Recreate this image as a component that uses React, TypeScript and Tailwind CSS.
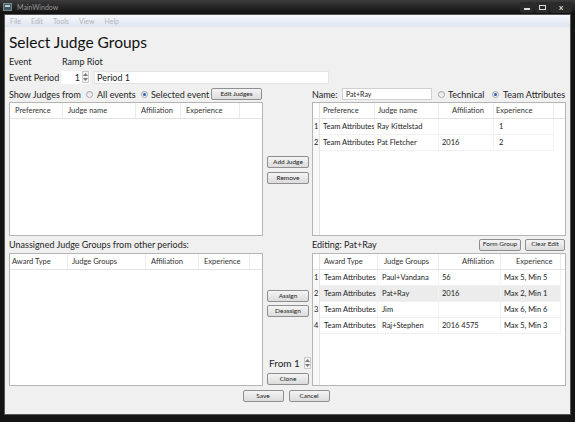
import React from "react";

type Col = { w: number; hx: number; cx: number; label: string };

const Btn = ({ label, w }: { label: string; w: number }) => (
  <div
    className="flex h-[12px] items-center justify-center whitespace-nowrap rounded-[2px] border border-[#8f8f8f] bg-linear-to-b from-[#f4f4f4] to-[#dcdcdc] text-[6.5px] leading-none text-[#222]"
    style={{ width: w }}
  >
    {label}
  </div>
);

const Radio = ({ on }: { on?: boolean }) => (
  <div className="flex h-[7px] w-[7px] shrink-0 items-center justify-center rounded-full border border-[#a5a5a5] bg-linear-to-b from-[#e2e2e2] to-white">
    {on && <div className="h-[3px] w-[3px] rounded-full bg-[#2b5fb4]" />}
  </div>
);

const Arrows = () => (
  <div className="flex h-[12px] w-[7px] flex-col items-center justify-center gap-[2px] border border-[#c9c9c9] bg-[#f3f3f3]">
    <svg width="5" height="3" viewBox="0 0 5 3">
      <path d="M0 3 L2.5 0 L5 3 Z" fill="#777" />
    </svg>
    <svg width="5" height="3" viewBox="0 0 5 3">
      <path d="M0 0 L2.5 3 L5 0 Z" fill="#777" />
    </svg>
  </div>
);

const Table = ({
  cols,
  rows,
  numbered,
  selected,
  h,
}: {
  cols: Col[];
  rows: string[][];
  numbered?: boolean;
  selected?: number;
  h: number;
}) => (
  <div
    className="w-[254px] overflow-hidden border border-[#b5b5b5] bg-white text-[7.5px] text-[#222]"
    style={{ height: h }}
  >
    <div className="flex h-[16px] items-center border-b border-[#e3e3e3] bg-white">
      {numbered && <div className="h-full w-[7px] shrink-0 border-r border-[#e3e3e3]" />}
      {cols.map((c) => (
        <div
          key={c.label}
          className="h-full shrink-0 overflow-hidden whitespace-nowrap border-r border-[#ececec] leading-[15px] text-[#333]"
          style={{ width: c.w, paddingLeft: c.hx }}
        >
          {c.label}
        </div>
      ))}
    </div>
    <div className="flex">
      {numbered && (
        <div className="flex h-[120px] w-[7px] shrink-0 flex-col border-r border-[#e3e3e3] bg-[#f9f9f9]">
          {rows.map((_, i) => (
            <div key={i} className="h-[16px] pl-[1px] leading-[16px]">
              {i + 1}
            </div>
          ))}
        </div>
      )}
      <div className="flex flex-col">
        {rows.map((r, i) => (
          <div
            key={i}
            className={`flex h-[16px] items-center border-b border-[#f0f0f0] ${
              selected === i ? "bg-[#ececec]" : ""
            }`}
          >
            {r.map((cell, j) => (
              <div
                key={j}
                className="h-full shrink-0 overflow-hidden whitespace-nowrap border-r border-[#f3f3f3] leading-[16px]"
                style={{ width: cols[j].w, paddingLeft: cols[j].cx }}
              >
                {cell}
              </div>
            ))}
          </div>
        ))}
      </div>
    </div>
  </div>
);

export default function App() {
  const topLeft: Col[] = [
    { w: 53, hx: 5, cx: 5, label: "Preference" },
    { w: 73, hx: 5, cx: 5, label: "Judge name" },
    { w: 45, hx: 5, cx: 5, label: "Affiliation" },
    { w: 59, hx: 5, cx: 5, label: "Experience" },
  ];
  const topRight: Col[] = [
    { w: 55, hx: 3, cx: 3, label: "Preference" },
    { w: 64, hx: 3, cx: 2, label: "Judge name" },
    { w: 55, hx: 13, cx: 3, label: "Affiliation" },
    { w: 60, hx: 2, cx: 5, label: "Experience" },
  ];
  const botLeft: Col[] = [
    { w: 58, hx: 2, cx: 2, label: "Award Type" },
    { w: 78, hx: 4, cx: 4, label: "Judge Groups" },
    { w: 53, hx: 5, cx: 5, label: "Affiliation" },
    { w: 51, hx: 5, cx: 5, label: "Experience" },
  ];
  const botRight: Col[] = [
    { w: 58, hx: 4, cx: 4, label: "Award Type" },
    { w: 61, hx: 6, cx: 4, label: "Judge Groups" },
    { w: 62, hx: 23, cx: 3, label: "Affiliation" },
    { w: 60, hx: 15, cx: 3, label: "Experience" },
  ];

  return (
    <div className="flex h-[422px] w-[575px] flex-col overflow-hidden bg-[#141414] font-['Lato',sans-serif]">
      {/* title bar */}
      <div className="flex h-[14px] items-center bg-linear-to-b from-[#3c3c3c] to-[#111] pl-[3px] pr-[3px]">
        <div className="h-[8px] w-[9px] border border-[#7a8a8a] bg-[#3d5a5a]">
          <div className="m-[1px] h-[2px] bg-[#bcd]" />
        </div>
        <span className="ml-[5px] text-[7px] text-[#9a9a9a]">MainWindow</span>
        <div className="ml-auto flex h-[11px] items-center gap-[1px]">
          <div className="flex h-full w-[14px] items-center justify-center rounded-[2px] bg-[#2a2a2a]">
            <div className="mt-[3px] h-[2px] w-[6px] bg-[#ddd]" />
          </div>
          <div className="flex h-full w-[14px] items-center justify-center rounded-[2px] bg-[#2a2a2a]">
            <div className="h-[5px] w-[7px] border-[1.5px] border-[#ddd]" />
          </div>
          <div className="flex h-full w-[22px] items-center justify-center rounded-[2px] bg-[#2a2a2a] text-[8px] font-bold leading-none text-[#ddd]">
            x
          </div>
        </div>
      </div>

      <div className="flex flex-1 flex-col px-[4px] pb-[7px]">
        <div className="flex flex-1 flex-col border border-[#555]">
          {/* menu */}
          <div className="flex h-[12px] items-center gap-[10px] bg-linear-to-b from-[#f7f9fc] to-[#dde5f1] pl-[5px] text-[7px] text-[#b0b4ba]">
            <span>File</span>
            <span>Edit</span>
            <span>Tools</span>
            <span>View</span>
            <span>Help</span>
          </div>

          {/* content */}
          <div className="flex flex-1 flex-col whitespace-nowrap bg-[#f0f0f0] pl-[4px] pr-[2px] text-[9px] text-[#1e1e1e]">
            <div className="mt-[4px] h-[23px] text-[15.5px] leading-[23px] text-[#111]">
              Select Judge Groups
            </div>
            <div className="flex h-[14px] items-center leading-none">
              <span className="w-[53px]">Event</span>
              <span>Ramp Riot</span>
            </div>
            <div className="mt-[1px] flex h-[16px] items-center leading-none">
              <span className="w-[52px]">Event Period</span>
              <div className="flex h-[13px] w-[29px] items-center justify-end bg-white pr-[1px]">
                <span className="mr-[2px]">1</span>
                <Arrows />
              </div>
              <div className="ml-[4px] flex h-[13px] w-[235px] items-center border border-[#e4e4e4] bg-white pl-[2px]">
                Period 1
              </div>
            </div>

            {/* top block */}
            <div className="mt-[2px] flex">
              <div className="flex w-[254px] flex-col">
                <div className="flex h-[14px] items-center leading-none">
                  <span className="w-[77px]">Show Judges from</span>
                  <Radio />
                  <span className="ml-[4px] w-[44px]">All events</span>
                  <Radio on />
                  <span className="ml-[3px] w-[60px]">Selected event</span>
                  <Btn label="Edit Judges" w={51} />
                </div>
                <div className="mt-[1px]">
                  <Table h={134} cols={topLeft} rows={[]} />
                </div>
              </div>
              <div className="flex w-[49px] flex-col items-start pl-[4px]">
                <div className="mt-[69px]"><Btn label="Add Judge" w={42} /></div>
                <div className="mt-[4px]"><Btn label="Remove" w={42} /></div>
              </div>
              <div className="flex w-[254px] flex-col">
                <div className="flex h-[14px] items-center leading-none">
                  <span className="w-[30px]">Name:</span>
                  <div className="flex h-[12px] w-[90px] items-center border border-[#d0d0d0] bg-white pl-[3px] text-[7px]">
                    Pat+Ray
                  </div>
                  <div className="ml-[6px]"><Radio /></div>
                  <span className="ml-[3px] w-[44px]">Technical</span>
                  <Radio on />
                  <span className="ml-[4px]">Team Attributes</span>
                </div>
                <div className="mt-[1px]">
                  <Table
                    h={134}
                    cols={topRight}
                    numbered
                    rows={[
                      ["Team Attributes", "Ray Kittelstad", "", "1"],
                      ["Team Attributes", "Pat Fletcher", "2016", "2"],
                    ]}
                  />
                </div>
              </div>
            </div>

            {/* bottom block */}
            <div className="flex">
              <div className="flex w-[254px] flex-col">
                <div className="flex h-[17px] items-center leading-none">
                  Unassigned Judge Groups from other periods:
                </div>
                <Table h={133} cols={botLeft} rows={[]} />
              </div>
              <div className="flex w-[49px] flex-col items-start pl-[4px]">
                <div className="mt-[54px]"><Btn label="Assign" w={42} /></div>
                <div className="mt-[3px]"><Btn label="Deassign" w={42} /></div>
                <div className="mt-auto flex h-[13px] items-center gap-[4px] pl-[2px] text-[10px] leading-none">
                  <span>From 1</span>
                  <Arrows />
                </div>
                <div className="mb-[1px] mt-[4px]"><Btn label="Clone" w={42} /></div>
              </div>
              <div className="flex w-[254px] flex-col">
                <div className="flex h-[17px] items-center leading-none">
                  <span>Editing: Pat+Ray</span>
                  <div className="ml-auto"><Btn label="Form Group" w={42} /></div>
                  <div className="ml-[4px] mr-[1px]"><Btn label="Clear Edit" w={40} /></div>
                </div>
                <Table
                  h={133}
                  cols={botRight}
                  numbered
                  selected={1}
                  rows={[
                    ["Team Attributes", "Paul+Vandana", "56", "Max 5, Min 5"],
                    ["Team Attributes", "Pat+Ray", "2016", "Max 2, Min 1"],
                    ["Team Attributes", "Jim", "", "Max 6, Min 6"],
                    ["Team Attributes", "Raj+Stephen", "2016 4575", "Max 5, Min 3"],
                  ]}
                />
              </div>
            </div>

            <div className="mt-[4px] flex justify-center gap-[5px] pr-[5px]">
              <Btn label="Save" w={41} />
              <Btn label="Cancel" w={41} />
            </div>
          </div>
        </div>
      </div>
    </div>
  );
}
